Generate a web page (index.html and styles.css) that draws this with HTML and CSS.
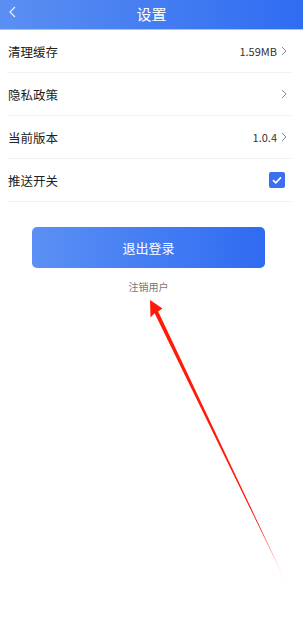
FILE: index.html
```html
<!DOCTYPE html>
<html lang="zh">
<head>
<meta charset="utf-8">
<link rel="stylesheet" href="styles.css">
</head>
<body>
<div class="page">
  <header class="topbar">
    <svg class="back" width="8" height="12" viewBox="0 0 8 12"><path d="M7 1 L2 6 L7 11" fill="none" stroke="#e8efff" stroke-width="1.2"/></svg>
    <h1 class="title">设置</h1>
  </header>
  <ul class="list">
    <li class="row"><span class="label">清理缓存</span><span class="value">1.59MB<svg class="chev" width="6" height="10" viewBox="0 0 6 10"><path d="M1 1 L5 5 L1 9" fill="none" stroke="#888" stroke-width="1"/></svg></span></li>
    <li class="row"><span class="label">隐私政策</span><span class="value"><svg class="chev" width="6" height="10" viewBox="0 0 6 10"><path d="M1 1 L5 5 L1 9" fill="none" stroke="#888" stroke-width="1"/></svg></span></li>
    <li class="row"><span class="label">当前版本</span><span class="value">1.0.4<svg class="chev" width="6" height="10" viewBox="0 0 6 10"><path d="M1 1 L5 5 L1 9" fill="none" stroke="#888" stroke-width="1"/></svg></span></li>
    <li class="row"><span class="label">推送开关</span><span class="check"><svg width="16" height="16" viewBox="0 0 16 16"><rect width="16" height="16" rx="2" fill="#3b6ff0"/><path d="M4 8.2 L6.8 10.8 L12 5.4" fill="none" stroke="#fff" stroke-width="1.6"/></svg></span></li>
  </ul>
  <div class="actions">
    <button class="logout">退出登录</button>
    <div class="cancel">注销用户</div>
  </div>
  <svg class="arrow" width="303" height="631" viewBox="0 0 303 631">
    <defs>
      <linearGradient id="fade" gradientUnits="userSpaceOnUse" x1="150" y1="300" x2="287" y2="584">
        <stop offset="0" stop-color="#ff1a0a"/>
        <stop offset="0.8" stop-color="#ff1a0a"/>
        <stop offset="1" stop-color="#ff1a0a" stop-opacity="0.1"/>
      </linearGradient>
    </defs>
    <polygon points="150,300 162.5,308.5 158.2,311.4 287,584 154.6,313.3 150.5,317.5" fill="url(#fade)"/>
  </svg>
</div>
</body>
</html>
```
FILE: styles.css
```css
* { box-sizing: border-box; }
html, body { margin: 0; padding: 0; background: #fff; }
body { font-family: "Noto Sans CJK SC", "Noto Sans", sans-serif; color: #222; }
.page { position: relative; width: 303px; height: 631px; overflow: hidden; }
.topbar {
  height: 30px;
  display: flex;
  align-items: center;
  justify-content: center;
  position: relative;
  background: linear-gradient(90deg, #5b8ff2 0%, #2f6cf1 100%);
  border-bottom: 1px solid #a9c3f7;
}
.back { position: absolute; left: 8px; top: 6px; }
.title { margin: 0; font-size: 15px; font-weight: 400; color: #fff; line-height: 1; padding-bottom: 3px; }
.list { list-style: none; margin: 0 12px 0 7px; padding: 0; }
.row {
  height: 43px;
  display: flex;
  align-items: center;
  justify-content: space-between;
  border-bottom: 1px solid #f0f0f0;
  padding-left: 1px;
}
.label { font-size: 12.5px; color: #222; }
.value { display: flex; align-items: center; gap: 4px; font-size: 11px; color: #333; }
.chev { display: block; margin-right: 4px; }
.check { display: flex; margin-right: 6px; }
.check svg { display: block; }
.actions { display: flex; flex-direction: column; align-items: center; padding-top: 25px; padding-right: 6px; }
.logout {
  width: 233px;
  height: 41px;
  border: none;
  border-radius: 5px;
  background: linear-gradient(90deg, #5b90f4 0%, #2f6bf1 100%);
  color: #fff;
  font-family: inherit;
  font-size: 13px;
  margin-left: 0;
}
.cancel { margin-top: 11px; font-size: 10px; color: #777; }
.arrow { position: absolute; left: 0; top: 0; pointer-events: none; }
```
